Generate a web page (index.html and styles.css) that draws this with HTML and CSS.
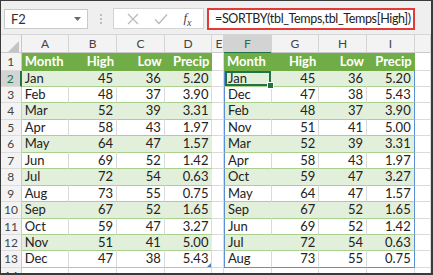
FILE: index.html
```html
<!DOCTYPE html>
<html lang="en">
<head>
  <meta charset="UTF-8">
  <title>SORTBY</title>
  <link rel="stylesheet" href="styles.css">
</head>
<body>

  <div class="window">
    <!-- Barra de fórmulas -->
    <div class="formula-bar">
      <div class="name-box">
        <span>F2</span>
        <svg class="caret" width="7" height="4" viewBox="0 0 7 4"><path d="M0 0h7L3.5 4z" fill="#6b6b6b"/></svg>
      </div>
      <div class="grip"><i></i><i></i><i></i></div>
      <div class="fx-box">
        <svg width="12" height="12" viewBox="0 0 12 12"><path d="M1 1l10 10M11 1L1 11" stroke="#b9b9b9" stroke-width="1.2"/></svg>
        <svg width="14" height="12" viewBox="0 0 14 12"><path d="M1 6.5l4 4L13 1.5" stroke="#b9b9b9" stroke-width="1.3" fill="none"/></svg>
        <span class="fx">f<sub>x</sub></span>
      </div>
      <div class="formula">=SORTBY(tbl_Temps,tbl_Temps[High])</div>
    </div>

    <!-- Planilha -->
    <div class="sheet">
      <div class="row heads">
        <div class="corner"><svg width="11" height="11" viewBox="0 0 11 11"><path d="M11 0v11H0z" fill="#c4c4c4"/></svg></div>
        <div class="ch">A</div><div class="ch">B</div><div class="ch">C</div><div class="ch">D</div>
        <div class="ch">E</div><div class="ch sel">F</div><div class="ch">G</div><div class="ch">H</div><div class="ch">I</div>
        <div class="ch"></div>
      </div>

      <div class="row r1">
        <div class="rh">1</div>
        <div class="hd">Month</div><div class="hd num">High</div><div class="hd num">Low</div><div class="hd num">Precip</div>
        <div class="c"></div>
        <div class="hd">Month</div><div class="hd num">High</div><div class="hd num">Low</div><div class="hd num">Precip</div>
        <div class="c"></div>
      </div>

      <div class="row">
        <div class="rh sel">2</div>
        <div class="b">Jan</div><div class="b num">45</div><div class="b num">36</div><div class="b num">5.20</div>
        <div class="c"></div>
        <div class="b sl active">Jan</div><div class="b num">45</div><div class="b num">36</div><div class="b num sr">5.20</div>
        <div class="c"></div>
      </div>
      <div class="row">
        <div class="rh">3</div>
        <div class="w">Feb</div><div class="w num">48</div><div class="w num">37</div><div class="w num">3.90</div>
        <div class="c"></div>
        <div class="w sl">Dec</div><div class="w num">47</div><div class="w num">38</div><div class="w num sr">5.43</div>
        <div class="c"></div>
      </div>
      <div class="row">
        <div class="rh">4</div>
        <div class="b">Mar</div><div class="b num">52</div><div class="b num">39</div><div class="b num">3.31</div>
        <div class="c"></div>
        <div class="b sl">Feb</div><div class="b num">48</div><div class="b num">37</div><div class="b num sr">3.90</div>
        <div class="c"></div>
      </div>
      <div class="row">
        <div class="rh">5</div>
        <div class="w">Apr</div><div class="w num">58</div><div class="w num">43</div><div class="w num">1.97</div>
        <div class="c"></div>
        <div class="w sl">Nov</div><div class="w num">51</div><div class="w num">41</div><div class="w num sr">5.00</div>
        <div class="c"></div>
      </div>
      <div class="row">
        <div class="rh">6</div>
        <div class="b">May</div><div class="b num">64</div><div class="b num">47</div><div class="b num">1.57</div>
        <div class="c"></div>
        <div class="b sl">Mar</div><div class="b num">52</div><div class="b num">39</div><div class="b num sr">3.31</div>
        <div class="c"></div>
      </div>
      <div class="row">
        <div class="rh">7</div>
        <div class="w">Jun</div><div class="w num">69</div><div class="w num">52</div><div class="w num">1.42</div>
        <div class="c"></div>
        <div class="w sl">Apr</div><div class="w num">58</div><div class="w num">43</div><div class="w num sr">1.97</div>
        <div class="c"></div>
      </div>
      <div class="row">
        <div class="rh">8</div>
        <div class="b">Jul</div><div class="b num">72</div><div class="b num">54</div><div class="b num">0.63</div>
        <div class="c"></div>
        <div class="b sl">Oct</div><div class="b num">59</div><div class="b num">47</div><div class="b num sr">3.27</div>
        <div class="c"></div>
      </div>
      <div class="row">
        <div class="rh">9</div>
        <div class="w">Aug</div><div class="w num">73</div><div class="w num">55</div><div class="w num">0.75</div>
        <div class="c"></div>
        <div class="w sl">May</div><div class="w num">64</div><div class="w num">47</div><div class="w num sr">1.57</div>
        <div class="c"></div>
      </div>
      <div class="row">
        <div class="rh">10</div>
        <div class="b">Sep</div><div class="b num">67</div><div class="b num">52</div><div class="b num">1.65</div>
        <div class="c"></div>
        <div class="b sl">Sep</div><div class="b num">67</div><div class="b num">52</div><div class="b num sr">1.65</div>
        <div class="c"></div>
      </div>
      <div class="row">
        <div class="rh">11</div>
        <div class="w">Oct</div><div class="w num">59</div><div class="w num">47</div><div class="w num">3.27</div>
        <div class="c"></div>
        <div class="w sl">Jun</div><div class="w num">69</div><div class="w num">52</div><div class="w num sr">1.42</div>
        <div class="c"></div>
      </div>
      <div class="row">
        <div class="rh">12</div>
        <div class="b">Nov</div><div class="b num">51</div><div class="b num">41</div><div class="b num">5.00</div>
        <div class="c"></div>
        <div class="b sl">Jul</div><div class="b num">72</div><div class="b num">54</div><div class="b num sr">0.63</div>
        <div class="c"></div>
      </div>
      <div class="row">
        <div class="rh">13</div>
        <div class="w">Dec</div><div class="w num">47</div><div class="w num">38</div><div class="w num resize">5.43</div>
        <div class="c"></div>
        <div class="w sl sb">Aug</div><div class="w num sb">73</div><div class="w num sb">55</div><div class="w num sr sb">0.75</div>
        <div class="c"></div>
      </div>
      <div class="row">
        <div class="rh">14</div>
        <div class="c"></div><div class="c"></div><div class="c"></div><div class="c"></div>
        <div class="c"></div>
        <div class="c"></div><div class="c"></div><div class="c"></div><div class="c"></div>
        <div class="c"></div>
      </div>
    </div>
  </div>

</body>
</html>
```

FILE: styles.css
```css
/* Reset */
* {
  margin: 0;
  padding: 0;
  box-sizing: border-box;
}

body {
  background: #fff;
  font-family: 'Lato', sans-serif;
  color: #222;
}

/* Janela */
.window {
  width: 433px;
  height: 275px;
  overflow: hidden;
  border: 1px solid #3a3a3a;
  border-right-width: 2px;
  border-bottom-width: 2px;
  background: #fff;
}

/* Barra de fórmulas */
.formula-bar {
  height: 34px;
  display: flex;
  align-items: center;
  padding: 2px 0 0 3px;
  background: #efefef;
  border-bottom: 1px solid #d6d6d6;
}

.name-box {
  width: 84px;
  height: 20px;
  display: flex;
  align-items: center;
  justify-content: space-between;
  padding: 0 6px 0 6px;
  background: #fff;
  border: 1px solid #c9c9c9;
  font-size: 13px;
  color: #333;
}

.grip {
  width: 25px;
  display: flex;
  flex-direction: column;
  align-items: center;
  gap: 2px;
}

.grip i {
  width: 2px;
  height: 2px;
  background: #bdbdbd;
}

.fx-box {
  width: 91px;
  height: 21px;
  display: flex;
  align-items: center;
  justify-content: space-around;
  padding: 0 4px 0 6px;
  background: #fff;
  border: 1px solid #d4d4d4;
}

.fx {
  font-family: 'Liberation Serif', serif;
  font-style: italic;
  font-size: 13px;
  color: #444;
}

.fx sub {
  font-size: 10px;
}

.formula {
  width: 208px;
  height: 22px;
  margin-left: 3px;
  padding-left: 6px;
  display: flex;
  align-items: center;
  background: #fff;
  border: 2px solid #e23a36;
  font-size: 12.5px;
  letter-spacing: -0.35px;
  color: #222;
  white-space: nowrap;
  overflow: hidden;
}

/* Grade */
.row {
  display: grid;
  grid-template-columns: 20.7px 47.7px 47.7px 47.7px 47.7px 11.5px 47.7px 47.7px 47.7px 47.7px 1fr;
  height: 16.45px;
  font-size: 13px;
  line-height: 15px;
}

.row > div {
  position: relative;
  white-space: nowrap;
  overflow: visible;
  padding: 0 3px;
}

.heads {
  height: 18px;
  background: #f3f3f3;
  border-bottom: 1px solid #c9c9c9;
}

.r1 {
  height: 17.6px;
}

.corner {
  display: flex;
  align-items: flex-end;
  justify-content: flex-end;
  padding: 0 2px 2px 0 !important;
  border-right: 1px solid #c9c9c9;
}

.ch {
  text-align: center;
  font-size: 12px;
  line-height: 17px;
  color: #444;
  border-right: 1px solid #d4d4d4;
}

.ch.sel {
  background: #d3d3d3;
  color: #217346;
  border-bottom: 2px solid #217346;
}

.rh {
  text-align: center;
  font-size: 12px;
  color: #444;
  background: #f3f3f3;
  border-right: 1px solid #c9c9c9;
  border-bottom: 1px solid #dcdcdc;
}

.rh.sel {
  background: #d3d3d3;
  color: #217346;
  border-right: 2px solid #217346;
}

.r1 .rh {
  line-height: 17px;
}

/* Células */
.c {
  border-right: 1px solid #dadada;
  border-bottom: 1px solid #dadada;
}

.hd {
  background: #70ad47;
  color: #fff;
  font-weight: 700;
  line-height: 17px;
}

.b {
  background: #e2efda;
  border-bottom: 1px solid #a9d08e;
  border-right: 1px solid #e2efda;
}

.w {
  background: #fff;
  border-bottom: 1px solid #a9d08e;
  border-right: 1px solid #dadada;
}

.num {
  text-align: right;
}

/* Intervalo derramado */
.sl {
  border-left: 1px solid #5b8fd6;
}

.sr {
  border-right: 1px solid #5b8fd6 !important;
}

.sb {
  border-bottom: 1px solid #5b8fd6;
}

.active {
  box-shadow: inset 0 0 0 2px #217346;
}

.active::after {
  content: '';
  position: absolute;
  right: -3px;
  bottom: -3px;
  width: 5px;
  height: 5px;
  background: #217346;
  border: 1px solid #fff;
  z-index: 2;
}

.resize::after {
  content: '';
  position: absolute;
  right: 0;
  bottom: 0;
  border-left: 4px solid transparent;
  border-bottom: 4px solid #4a7ebb;
}
```
